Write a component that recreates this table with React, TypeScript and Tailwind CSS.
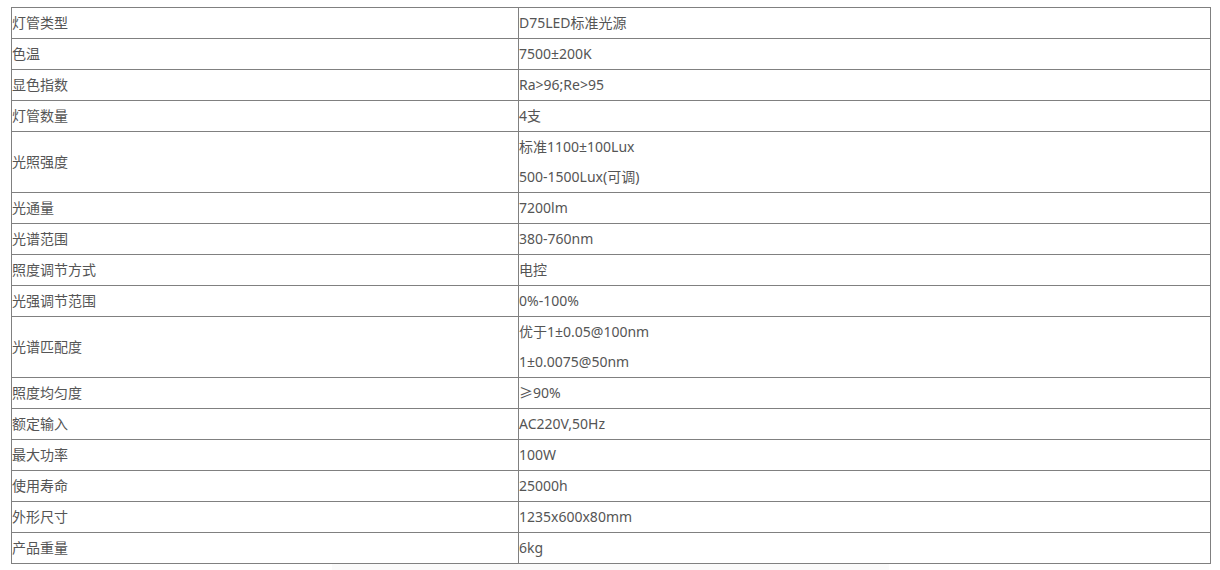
import React from "react";

const rows: [string, string[]][] = [
  ["灯管类型", ["D75LED标准光源"]],
  ["色温", ["7500±200K"]],
  ["显色指数", ["Ra>96;Re>95"]],
  ["灯管数量", ["4支"]],
  ["光照强度", ["标准1100±100Lux", "500-1500Lux(可调)"]],
  ["光通量", ["7200lm"]],
  ["光谱范围", ["380-760nm"]],
  ["照度调节方式", ["电控"]],
  ["光强调节范围", ["0%-100%"]],
  ["光谱匹配度", ["优于1±0.05@100nm", "1±0.0075@50nm"]],
  ["照度均匀度", ["≥90%"]],
  ["额定输入", ["AC220V,50Hz"]],
  ["最大功率", ["100W"]],
  ["使用寿命", ["25000h"]],
  ["外形尺寸", ["1235x600x80mm"]],
  ["产品重量", ["6kg"]],
];

export default function App() {
  return (
    <div
      className="w-[1220px] h-[570px] bg-white relative overflow-hidden text-[14px] leading-[30px] text-[#555]"
      style={{ fontFamily: '"Noto Sans", "Noto Sans CJK SC", sans-serif' }}
    >
      <div className="pt-[7px] pl-[11px]">
        <div className="w-[1200px] border border-[#808080]">
          {rows.map(([k, vals], i) => (
            <div
              key={k}
              className={`flex ${i > 0 ? "border-t border-[#808080]" : ""}`}
            >
              <div className="w-[507px] shrink-0 border-r border-[#808080] flex items-center">
                <span className="leading-[29px] pb-[1px]">{k}</span>
              </div>
              <div className="flex-1 flex flex-col">
                {vals.map((v) => (
                  <div key={v} className="leading-[29px] pb-[1px]">{v}</div>
                ))}
              </div>
            </div>
          ))}
        </div>
      </div>
      <div className="absolute left-[332px] top-[564px] w-[557px] h-[6px] bg-[#fafafa]" />
    </div>
  );
}
